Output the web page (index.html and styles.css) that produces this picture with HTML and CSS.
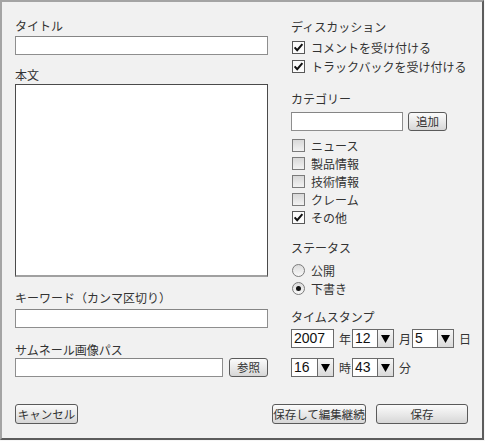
FILE: index.html
```html
<!DOCTYPE html>
<html lang="ja">
<head>
<meta charset="utf-8">
<title>エントリー編集</title>
<link rel="stylesheet" href="styles.css">
</head>
<body>
<div class="window">
  <div class="main">
    <div class="col-left">
      <div class="lbl lbl-title">タイトル</div>
      <div class="input in-title"></div>

      <div class="lbl lbl-body">本文</div>
      <div class="textarea"></div>

      <div class="lbl lbl-keyword">キーワード（カンマ区切り）</div>
      <div class="input in-keyword"></div>

      <div class="lbl lbl-thumb">サムネール画像パス</div>
      <div class="row-inline">
        <div class="input in-thumb"></div>
        <div class="btn btn-small">参照</div>
      </div>
    </div>

    <div class="col-right">
      <div class="lbl lbl-discuss">ディスカッション</div>
      <div class="check-list check-discuss">
        <div class="check-row tall"><span class="cb checked"><svg viewBox="0 0 13 13" width="13" height="13"><path d="M2.6 6.3 L5.2 9.2 L10.4 3.2" fill="none" stroke="#111" stroke-width="2"/></svg></span><span>コメントを受け付ける</span></div>
        <div class="check-row tall"><span class="cb checked"><svg viewBox="0 0 13 13" width="13" height="13"><path d="M2.6 6.3 L5.2 9.2 L10.4 3.2" fill="none" stroke="#111" stroke-width="2"/></svg></span><span>トラックバックを受け付ける</span></div>
      </div>

      <div class="lbl lbl-cat">カテゴリー</div>
      <div class="row-inline row-cat">
        <div class="input in-cat"></div>
        <div class="btn btn-small">追加</div>
      </div>
      <div class="check-list check-cat">
        <div class="check-row"><span class="cb"></span><span>ニュース</span></div>
        <div class="check-row"><span class="cb"></span><span>製品情報</span></div>
        <div class="check-row"><span class="cb"></span><span>技術情報</span></div>
        <div class="check-row"><span class="cb"></span><span>クレーム</span></div>
        <div class="check-row"><span class="cb checked"><svg viewBox="0 0 13 13" width="13" height="13"><path d="M2.6 6.3 L5.2 9.2 L10.4 3.2" fill="none" stroke="#111" stroke-width="2"/></svg></span><span>その他</span></div>
      </div>

      <div class="lbl lbl-status">ステータス</div>
      <div class="check-list check-status">
        <div class="check-row"><span class="rb"></span><span>公開</span></div>
        <div class="check-row"><span class="rb checked"></span><span>下書き</span></div>
      </div>

      <div class="lbl lbl-time">タイムスタンプ</div>
      <div class="time-row row1">
        <div class="num-input">2007</div>
        <span class="unit">年</span>
        <div class="select"><span class="sel-val">12</span><span class="sel-arrow"><svg viewBox="0 0 9 8" width="9" height="8"><path d="M0 0 H9 L4.5 8 Z" fill="#000"/></svg></span></div>
        <span class="unit">月</span>
        <div class="select"><span class="sel-val">5</span><span class="sel-arrow"><svg viewBox="0 0 9 8" width="9" height="8"><path d="M0 0 H9 L4.5 8 Z" fill="#000"/></svg></span></div>
        <span class="unit">日</span>
      </div>
      <div class="time-row row2">
        <div class="select sel-hour"><span class="sel-val">16</span><span class="sel-arrow"><svg viewBox="0 0 9 8" width="9" height="8"><path d="M0 0 H9 L4.5 8 Z" fill="#000"/></svg></span></div>
        <span class="unit">時</span>
        <div class="select"><span class="sel-val">43</span><span class="sel-arrow"><svg viewBox="0 0 9 8" width="9" height="8"><path d="M0 0 H9 L4.5 8 Z" fill="#000"/></svg></span></div>
        <span class="unit">分</span>
      </div>
    </div>
  </div>

  <div class="actions">
    <div class="btn btn-cancel">キャンセル</div>
    <div class="spacer"></div>
    <div class="btn btn-continue">保存して編集継続</div>
    <div class="btn btn-save">保存</div>
  </div>
</div>
</body>
</html>
```

FILE: styles.css
```css
html, body {
  margin: 0;
  padding: 0;
  background: #f7f7f7;
}

body {
  font-family: "Noto Sans CJK JP", "Noto Sans", sans-serif;
  font-size: 12px;
  color: #333;
}

.window {
  box-sizing: border-box;
  width: 484px;
  height: 440px;
  border-style: solid;
  border-width: 2px;
  border-color: #a4a4a4 #5c5c5c #5c5c5c #a4a4a4;
  background: #f1f1f1;
  padding: 16px 14px 14px 13px;
  display: flex;
  flex-direction: column;
}

.main {
  display: flex;
  gap: 23px;
}

.col-left {
  width: 253px;
  display: flex;
  flex-direction: column;
}

.col-right {
  flex: 1;
  display: flex;
  flex-direction: column;
}

.lbl {
  height: 16px;
  line-height: 16px;
  white-space: nowrap;
}

.input {
  box-sizing: border-box;
  height: 19px;
  background: #fff;
  border: 1px solid #8e8e8e;
  border-top-color: #858585;
}

.in-title { margin-top: 2px; }
.lbl-body { margin-top: 12px; }

.textarea {
  box-sizing: border-box;
  margin-top: 1px;
  height: 193px;
  background: #fff;
  border: 1px solid #4a4a4a;
  border-bottom: 2px solid #a0a0a0;
}

.lbl-keyword { margin-top: 13px; }
.in-keyword { margin-top: 3px; }
.lbl-thumb { margin-top: 14px; }

.row-inline {
  display: flex;
  gap: 6px;
  align-items: center;
}

.in-thumb { width: 208px; }

.btn {
  box-sizing: border-box;
  height: 19px;
  border: 1px solid #5a5a5a;
  border-radius: 3px;
  background: linear-gradient(#fbfbfb, #e6e6e6 60%, #d6d6d6);
  font-size: 11.5px;
  line-height: 17px;
  text-align: center;
  color: #333;
  white-space: nowrap;
}

.btn-small { width: 39px; }

/* right column */
.lbl-discuss { margin-top: 1px; }

.check-list {
  display: flex;
  flex-direction: column;
}

.check-discuss { margin-top: 3px; }

.check-row {
  height: 18px;
  display: flex;
  align-items: center;
  gap: 6px;
  padding-left: 1px;
  white-space: nowrap;
}

.check-row.tall { height: 19px; }

.cb {
  box-sizing: border-box;
  width: 13px;
  height: 13px;
  border: 1px solid #7b7b7b;
  background: linear-gradient(#d8d8d8, #f2f2f2);
  display: flex;
  align-items: center;
  justify-content: center;
  flex: none;
}

.cb.checked {
  background: #fbfbfb;
  border-color: #585858;
}

.cb svg {
  display: block;
  margin: -1px;
}

.rb {
  box-sizing: border-box;
  width: 13px;
  height: 13px;
  border-radius: 50%;
  border: 1px solid #7b7b7b;
  background: linear-gradient(#dcdcdc, #f8f8f8);
  display: flex;
  align-items: center;
  justify-content: center;
  flex: none;
}

.rb.checked::after {
  content: "";
  width: 5px;
  height: 5px;
  border-radius: 50%;
  background: #111;
}

.lbl-cat { margin-top: 15px; }
.row-cat { margin-top: 5px; gap: 5px; }
.in-cat { width: 112px; }
.check-cat { margin-top: 5px; }

.lbl-status { margin-top: 14px; }
.check-status { margin-top: 5px; }

.lbl-time { margin-top: 12px; }

.time-row {
  display: flex;
  align-items: center;
  height: 19px;
}

.row1 { margin-top: 4px; }
.row2 { margin-top: 10px; }

.num-input,
.select {
  box-sizing: border-box;
  height: 19px;
  background: #fff;
  border: 1px solid #6a6a6a;
  font-family: "Liberation Sans", Arial, sans-serif;
  font-size: 14px;
  line-height: 17px;
  color: #111;
}

.num-input {
  width: 43px;
  padding-left: 2px;
}

.select {
  width: 42px;
  display: flex;
}

.sel-hour { width: 43px; }

.sel-val {
  flex: 1;
  padding-left: 2px;
}

.sel-arrow {
  width: 15px;
  border-left: 1px solid #6a6a6a;
  background: linear-gradient(#f6f6f6, #dadada);
  display: flex;
  align-items: center;
  justify-content: center;
}

.sel-arrow svg { display: block; }

.unit {
  margin: 0 1px 0 5px;
  line-height: 17px;
}

/* bottom actions */
.actions {
  margin-top: auto;
  display: flex;
  align-items: center;
}

.actions .btn { height: 20px; line-height: 18px; }

.btn-cancel { width: 63px; }
.spacer { flex: 1; }
.btn-continue { width: 94px; margin-right: 10px; }
.btn-save { width: 92px; }
```
